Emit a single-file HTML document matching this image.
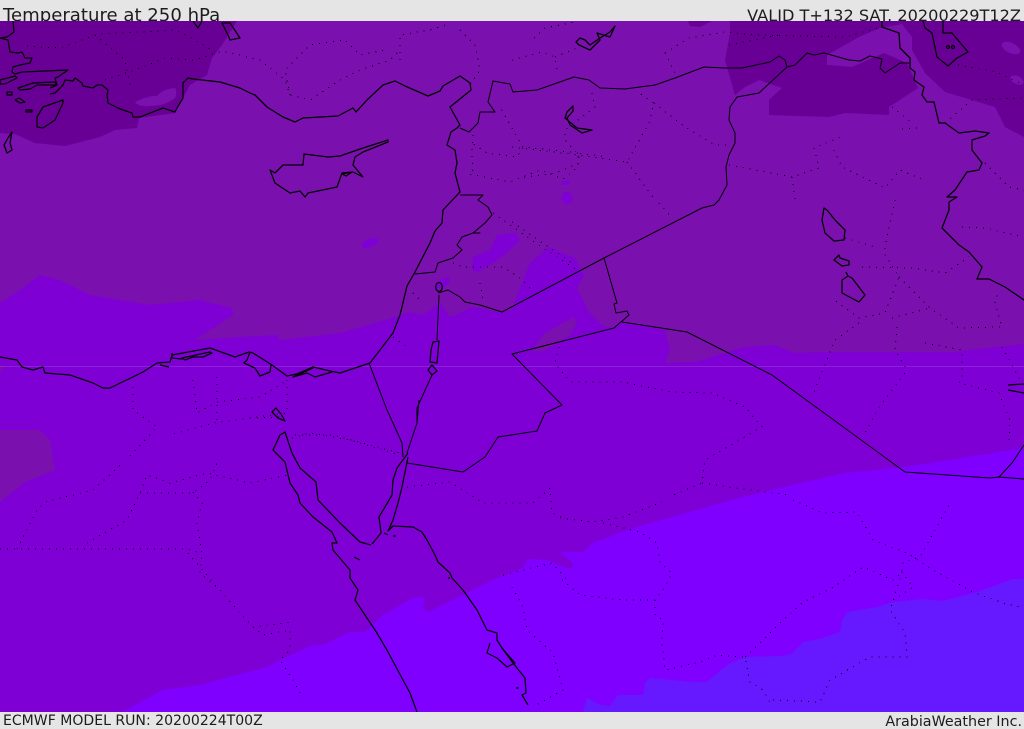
<!DOCTYPE html>
<html><head><meta charset="utf-8"><title>Temperature at 250 hPa</title>
<style>html,body{margin:0;padding:0;background:#e5e5e5}svg{display:block}text{font-family:"DejaVu Sans","Liberation Sans",sans-serif;fill:#1c1c1c}</style></head>
<body>
<svg width="1024" height="729" viewBox="0 0 1024 729" xmlns="http://www.w3.org/2000/svg">
<rect width="1024" height="729" fill="#e5e5e5"/>
<text x="3" y="21" font-size="18.1">Temperature at 250 hPa</text>
<text x="1021" y="21" font-size="16.15" text-anchor="end">VALID T+132 SAT. 20200229T12Z</text>
<text x="3" y="725" font-size="14.05">ECMWF MODEL RUN: 20200224T00Z</text>
<text x="1022" y="726" font-size="14.3" text-anchor="end">ArabiaWeather Inc.</text>
<svg x="0" y="21" width="1024" height="691" viewBox="0 21 1024 691">
<rect x="0" y="21" width="1024" height="691" fill="#7a10ad"/>
<!-- dark -->
<g fill="#680096">
<path d="M0 21H237L222 45 212 58 207 75 190 85 182 100 175 113 139 118 137 128 115 130 100 137 65 146 35 143 15 134 0 133Z"/>
<path d="M688 21H712L700 27 690 26Z"/>
<path d="M730 21H1024V137L1005 127 995 107 945 92 925 73 912 50 912 37 902 24 880 28 859 37 827 55V65L852 67 884 53 907 63 918 88 889 107V115L845 113 829 117 769 115V100L782 88 759 80 745 87 735 95 725 60 730 33Z"/>
</g>
<g fill="#7a10ad">
<path d="M135 102Q150 95 157 96 162 89 175 88 178 93 175 98 165 106 150 106 138 107 135 102Z"/>
<ellipse cx="1011" cy="48" rx="10" ry="5" transform="rotate(25 1011 48)"/>
<ellipse cx="1017" cy="80" rx="7" ry="4" transform="rotate(25 1017 80)"/>
</g>
<!-- zone 3 -->
<g fill="#7f00d5">
<path d="M0 303 20 290 40 275 60 280 90 295 150 305 200 300 232 308 233 315 195 340 240 337 277 335 280 340 340 333 395 317 410 312 423 315 440 303 450 317 473 307 500 312 512 310 519 290 530 263 549 247 562 253 575 258 584 275 577 288 589 312 602 325 612 328 622 322 665 330 670 350 665 363 695 362 745 347 775 345 795 353 825 352 952 352 1024 344V712H0Z"/>
<path d="M473 257 490 250 497 235 515 233 520 240 505 255 490 265 478 272 472 270Z"/>
<ellipse cx="370" cy="243" rx="9" ry="4" transform="rotate(-20 370 243)"/>
<ellipse cx="567" cy="198" rx="5.5" ry="6"/>
<ellipse cx="443" cy="283" rx="8" ry="4" transform="rotate(-35 443 283)"/>
<path d="M562 181h8v4h-8z"/>
</g>
<g fill="#7a10ad">
<path d="M532 350 545 333 574 317 577 323 570 335 542 352Z"/>
<path d="M0 430H40L50 440 55 470 25 482 0 502Z"/>
<path d="M0 366 6 366 0 372Z"/>
</g>
<!-- zone 4 -->
<path fill="#7f00ff" d="M1024 448 905 467 845 473 805 482 739 498 633 528 593 543 583 552 560 552 573 563 572 569 567 568 547 560 528 559 523 568 493 580 463 595 428 612 423 608 425 597 413 598 383 615 365 632 350 632 323 645 313 645 280 660 267 667 200 685 163 690 122 712H1024Z"/>
<!-- zone 5 -->
<path fill="#6619ff" d="M583 712 587 698 600 705 610 706 618 695 643 695 645 683 650 678 693 682 707 682 727 665 745 657 783 656 793 653 803 642 823 638 840 632 842 620 847 612 877 607 893 602 923 599 943 601 977 592 1013 579 1024 579V712Z"/>
<rect x="0" y="366" width="1024" height="1" fill="#a04fdc" opacity=".4"/>
<!-- dotted -->
<g fill="none" stroke="#000" stroke-width="1" stroke-dasharray="1 6" shape-rendering="crispEdges">
<path d="M27 46 60 48 98 34 140 32 175 30 195 40 215 52"/>
<path d="M95 35 125 60 130 85"/>
<path d="M105 80 135 70 165 58 195 60 222 51 260 60 285 80 290 95 310 100 340 80 360 70 390 60 400 50"/>
<path d="M290 95 285 70 310 45 345 40 360 55 385 50M400 60 400 35 430 30 445 25M460 30 475 45 480 70 470 85"/>
<path d="M473 135 472 153 473 170 469 174 510 182 540 170 563 179 578 167 578 153 607 157M578 153 523 147 517 157 487 153 472 143M523 147 500 107M493 213 543 248 577 270M453 263 463 267 503 267 523 280 533 292M480 283 483 300"/>
<path d="M512 60 542 52 555 57 557 70M555 57 589 43M534 38 545 28 575 22M665 53 689 38 725 32 755 35 845 37 882 27M729 45 779 35M665 53 675 73M592 93 595 107 565 130 565 140 579 155 579 163 555 173 519 178M512 147 579 155 627 162 649 123 654 103 639 93M654 103 685 127 715 145 732 145M627 162 655 200"/>
<path d="M729 165 792 177 819 168 814 148 845 135M834 150 842 167 885 188 900 170 924 180M792 177 795 200M902 129 919 128M892 107 912 123M945 123 972 100 1024 98M958 65 997 72 1023 85M985 163 1009 187 1024 190"/>
<path d="M512 222 572 263M659 203 672 218M845 238 875 247M895 200 889 227 884 253 899 277 885 313 859 318 832 298M859 323 835 340 812 397M862 267 912 268 945 273 969 257M899 277 930 308 959 328 1002 327 995 303 999 290M892 318 930 308M897 327 895 350 905 367 905 373 879 407 865 433M925 343 962 350 962 377 959 383 999 393 1010 420 1009 443M962 227 985 228 1024 237M1002 347 1022 383"/>
<path d="M559 347 555 363 570 382 622 382 672 392 712 393 745 407 762 427 705 460 702 483 669 497M702 483 735 488 789 495"/>
<path d="M560 518 593 522 623 517 662 502M603 523 640 532 657 543 660 563 672 573 665 587 655 600 623 600 580 595 560 578M655 600 655 615 663 620 662 643 665 670 700 662 717 655 745 657 750 682 763 690 770 703M773 700 820 702 830 680 870 657 907 657 905 633 890 610 902 572 913 587 893 600M745 657 763 640 780 623 803 602 832 588 863 567 893 580 902 572 903 562 920 557 950 503M793 500 823 513 857 512 873 540 907 553 933 570 973 592 1003 603 1024 608"/>
<path d="M0 549H187L200 553M17 549 37 510 45 502 93 490 123 463M87 543 127 520 140 493 147 475 170 483 207 473 250 483 287 475M140 493H193L210 480 217 463M193 492 202 503 197 523 202 553 200 573 220 590 240 613 253 627 293 622M188 553 217 587M253 627 263 635 290 630 290 650 280 660 293 680 300 693"/>
<path d="M133 387V410L157 427 128 458M193 380 197 413 217 402 260 397 288 380M287 380 287 413 250 418 213 423 170 435M217 377V423M295 435H333L400 453M292 438 310 433 350 440 400 455M407 487 450 482 483 503 533 503 550 488 552 513 570 520M512 587 523 607 527 630 553 653 563 690 533 707M503 575 552 563 567 580M413 293 420 300M393 337 407 347M250 418 283 417"/>
</g>
<!-- coast and lake lines -->
<g fill="none" stroke="#000" stroke-width="1.25" stroke-linejoin="round">
<path d="M0 38 8 40 10 52 18 53 22 52 25 58 32 58 30 63 20 65 13 67 12 72 15 74 22 72 68 70 58 77 55 78 57 85 50 88M18 88 33 83 55 82 57 85 37 85 30 89 20 90ZM50 94 55 93 63 85 65 80 73 81 75 78 82 83 83 86 93 88 97 85 102 85 108 90 107 95 108 103 118 108 123 110 132 113 133 117 140 117 163 108 175 112 177 108 183 98 183 83 188 78 193 79 220 82 240 88 250 93 255 95 267 107 283 117 295 122 303 118 338 116 353 108 356 112 367 100 383 85 395 81 405 86 428 96 440 91 443 86 460 76 470 83 471 90 450 107 460 125 457 128 451 132 447 145 455 150 457 163 455 173 460 192 443 210 442 223 435 231 430 243 415 272 407 286 400 315 393 333 370 363 340 373 330 371 313 367 297 374 287 376 272 365 253 353 249 352 235 357 210 348 172 355 170 362 157 363 143 372 110 388 103 388 93 383 70 375 45 373 43 367 33 370 22 367 17 360 0 357"/>
<path d="M13 21 14 32 7 37 0 38M193 21 198 28 202 21M222 23 230 23 240 38 230 40 228 35ZM63 100 43 107 37 117 37 127 43 128 55 120 63 103ZM12 132 8 138 4 145 7 153 12 150 10 143ZM0 80 15 76 17 78 5 84 0 84ZM7 92h5v3h-5zM15 100l4 -2 6 4 -5 1ZM26 110h6v2h-6z"/>
<path d="M388 140 363 148 340 156 328 157 304 154 303 165 283 165 275 173 270 170 275 183 290 193 300 191 305 197 308 193 337 187 342 173 353 172 363 177 353 165 355 157 363 152 388 142ZM342 174 352 172 346 176Z"/>
<ellipse cx="439" cy="287" rx="3.3" ry="4.5"/>
<path d="M882 21V27L899 33 900 48 910 58 910 68 915 72 914 80 924 87 922 95 927 102 934 102 939 123 945 123 959 133 975 131 989 133 985 136 972 140 972 150 982 163 979 170 967 172 955 190 947 197 957 197 949 202 949 210 942 228 959 245 969 252 982 267 977 279 989 279 1005 287 1024 300"/>
<path d="M433 342 439 341 437 363 430 362 431 350ZM432 365 428 370 432 375 437 371Z"/>
<path d="M408 453 397 468 393 480 392 495 385 507 379 517 381 533 372 544M408 457 402 487 398 503 393 520 388 531 393 526 413 527 422 532 427 540 435 555 438 562 450 573 452 578 463 590 477 610 487 630 497 633 497 640 502 648 513 663 525 678 526 693 522 695 528 705"/>
<path d="M490 643 487 653 497 658 507 667 515 663 508 655 502 648M371 545 360 542 340 523 318 500 316 482 300 468 292 453 285 432 280 435 273 450 285 462 290 483 298 495 300 503 313 517 332 532 337 543 332 543 333 550 350 570 350 578 358 590 355 600 377 633 388 652 410 693 417 712"/>
<path d="M276 408 272 412 278 418 285 421 281 414ZM384 533 388 535M354 557 360 560M393 536h3M449 577v2M516 688h3"/>
<path d="M172 353 172 358 182 359M182 358 210 352 212 353 203 357 193 357 185 360ZM250 352 247 360 244 363 255 368 260 376 270 372 271 365M313 368 293 377 307 373 315 377 332 372M160 365 169 367"/>
<path d="M615 26 610 37 597 33 600 40 590 50 579 45 576 42 580 38 585 40 590 45 600 38 610 32ZM573 106 567 112 565 118 577 128 592 130 582 133 570 125 567 118 573 111Z"/>
<path d="M824 208 822 220 825 233 834 241 844 240 845 230 835 220 827 210ZM839 255 834 260 842 266 849 265 849 261 840 258ZM846 272 848 276 842 280 842 293 859 302 865 295 852 278 848 276M1008 385 1024 384M1008 390 1024 393"/>
<path d="M923 21 925 28 932 33 937 57 948 66 957 58 968 52 952 33 943 33 943 21"/>
<circle cx="948" cy="47" r="1.5"/><circle cx="953" cy="47" r="1.5"/>
</g>
<!-- borders -->
<g fill="none" stroke="#000" stroke-width="1" stroke-linejoin="round">
<path d="M460 195H480L483 195 478 200 488 207 492 215 485 223 473 233 480 233 473 233 462 237 457 245 462 250 453 258 438 263 435 272 415 274"/>
<path d="M439 295 437 340M438 293 448 290 460 297 465 302 480 305 502 312 604 258 702 208 714 205 719 200 727 185 726 167 729 155 735 143 735 133 729 120 730 107 737 97 759 93 787 67"/>
<path d="M460 128 469 132 478 123 480 112 495 112 488 102 493 81 510 84 513 92 537 90 574 77 589 80 600 88 625 89 655 85 675 78 704 67 725 68 742 68 770 62 779 56 785 60 787 67 795 65 807 53 814 55 824 53 849 60 860 61 870 56 882 59 880 68 885 73 900 63 909 63"/>
<path d="M604 258 617 303 614 304 616 313 627 311 629 315 614 328 512 354 562 405 545 413 537 431 498 437 485 457 463 472 407 463"/>
<path d="M622 322 687 332 772 375 905 472 990 478 999 477 1024 479M999 477 1012 463 1024 445"/>
<path d="M369 363 387 410 393 423 402 443 403 457M419 400 417 423 407 453M432 375 417 408 417 423"/>
</g>
</svg>
</svg>
</body></html>
